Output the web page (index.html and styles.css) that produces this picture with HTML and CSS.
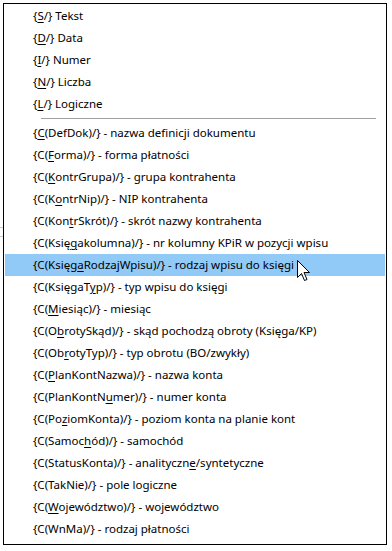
FILE: index.html
```html
<!DOCTYPE html>
<html lang="pl">
<head>
<meta charset="utf-8">
<link rel="stylesheet" href="styles.css">
</head>
<body>
<div class="bg-mark bg-mark-1"></div>
<div class="bg-mark bg-mark-2"></div>
<div class="menu">
  <div class="item">{<u>S</u>/} Tekst</div>
  <div class="item">{<u>D</u>/} Data</div>
  <div class="item">{<u>I</u>/} Numer</div>
  <div class="item">{<u>N</u>/} Liczba</div>
  <div class="item">{<u>L</u>/} Logiczne</div>
  <div class="sep"></div>
  <div class="item">{<u>C</u>(DefDok)/} - nazwa definicji dokumentu</div>
  <div class="item">{C(<u>F</u>orma)/} - forma płatności</div>
  <div class="item">{C(<u>K</u>ontrGrupa)/} - grupa kontrahenta</div>
  <div class="item">{C(K<u>o</u>ntrNip)/} - NIP kontrahenta</div>
  <div class="item">{C(Kon<u>t</u>rSkrót)/} - skrót nazwy kontrahenta</div>
  <div class="item">{C(Księ<u>g</u>akolumna)/} - nr kolumny KPiR w pozycji wpisu</div>
  <div class="item active">{C(Księg<u>a</u>RodzajWpisu)/} - rodzaj wpisu do księgi</div>
  <div class="item">{C(KsięgaT<u>y</u>p)/} - typ wpisu do księgi</div>
  <div class="item">{C(<u>M</u>iesiąc)/} - miesiąc</div>
  <div class="item">{C(O<u>b</u>rotySkąd)/} - skąd pochodzą obroty (Księga/KP)</div>
  <div class="item">{C(Ob<u>r</u>otyTyp)/} - typ obrotu (BO/zwykły)</div>
  <div class="item">{C(<u>P</u>lanKontNazwa)/} - nazwa konta</div>
  <div class="item">{C(PlanKontN<u>u</u>mer)/} - numer konta</div>
  <div class="item">{C(Po<u>z</u>iomKonta)/} - poziom konta na planie kont</div>
  <div class="item">{C(Samoc<u>h</u>ód)/} - samochód</div>
  <div class="item">{C(StatusKonta)/} - analityczn<u>e</u>/syntetyczne</div>
  <div class="item">{C(TakNie)/} - pole logiczne</div>
  <div class="item">{C(<u>W</u>ojewództwo)/} - województwo</div>
  <div class="item">{C(WnMa)/} - rodzaj płatności</div>
</div>
<svg class="cursor" width="14" height="24" viewBox="0 0 14 24">
  <path d="M0.5 0.5 L0.5 17.5 L4.5 13.5 L7.5 20.5 L10 19.5 L7 12.5 L12.5 12.5 Z" fill="#fff" stroke="#000" stroke-width="1" stroke-linejoin="miter"/>
</svg>
</body>
</html>
```
FILE: styles.css
```css
html, body {
  margin: 0;
  padding: 0;
  background: #fff;
}
body {
  position: relative;
  width: 392px;
  height: 551px;
  overflow: hidden;
  font-family: "Noto Sans", "Open Sans", sans-serif;
  font-size: 11.5px;
  color: #000;
}
.menu {
  margin: 3px 0 0 3px;
  width: 384px;
  height: 542px;
  box-sizing: border-box;
  border: 1px solid #000;
  background: #fff;
  padding: 1px 1px 0 1px;
  display: flex;
  flex-direction: column;
}
.item {
  height: 22px;
  line-height: 22px;
  padding-left: 28px;
  white-space: nowrap;
}
.item u {
  text-decoration-thickness: 1px;
  text-underline-offset: 2px;
}
.item.active {
  background: #91c9f7;
}
.sep {
  height: 1px;
  background: #a0a0a0;
  margin: 3px 9px 3px 36px;
}
.cursor {
  position: absolute;
  left: 297px;
  top: 260px;
}
.bg-mark {
  position: absolute;
  left: 0;
  width: 3px;
  height: 1px;
  background: #c8c8c8;
}
.bg-mark-1 { top: 227px; }
.bg-mark-2 { top: 236px; }
```
